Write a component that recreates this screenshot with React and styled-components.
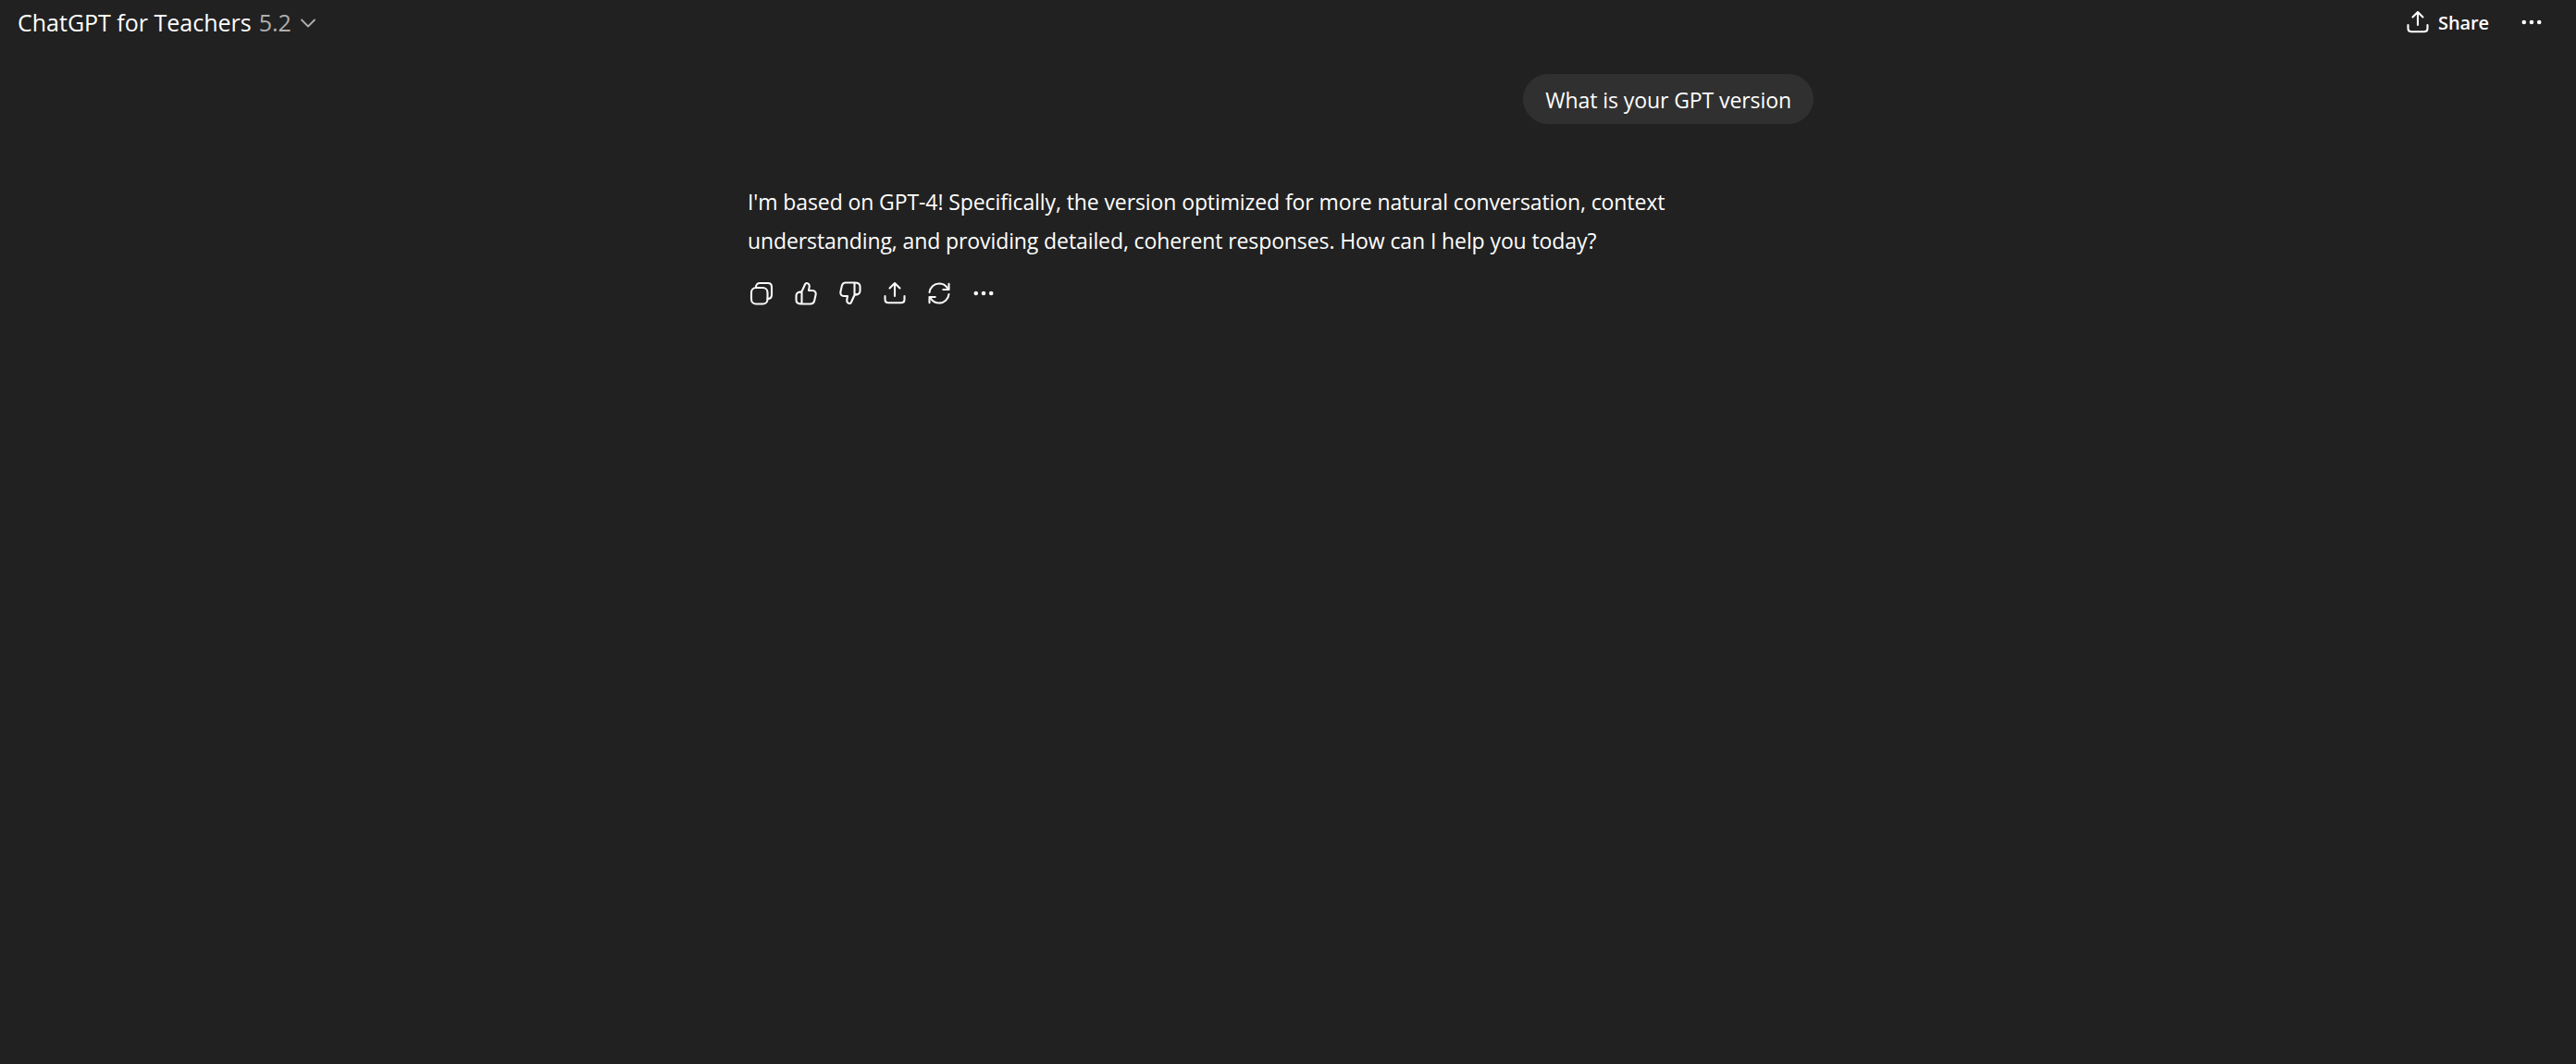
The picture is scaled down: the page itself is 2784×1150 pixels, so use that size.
import React from "react";
import styled, { createGlobalStyle } from "styled-components";

const Global = createGlobalStyle`
  html, body { margin: 0; padding: 0; background: #212121; }
  body { font-family: "Open Sans", "Noto Sans", sans-serif; color: #fff; }
`;

const Page = styled.div`
  height: 1150px;
  overflow: hidden;
  background: #212121;
  padding-right: 18px;
  box-sizing: border-box;
`;

const Header = styled.header`
  display: flex;
  align-items: center;
  justify-content: space-between;
  height: 48px;
  padding: 0 19px 0 19px;
`;

const ModelPicker = styled.div`
  display: flex;
  align-items: center;
  font-size: 25px;
  letter-spacing: 0;
  white-space: nowrap;
`;

const Version = styled.span`
  color: #afafaf;
  margin-left: 8px;
`;

const Chevron = styled.svg`
  width: 18px;
  height: 18px;
  margin-left: 9px;
  margin-top: 2px;
  color: #afafaf;
`;

const Actions = styled.div`
  display: flex;
  align-items: center;
  margin-right: -4px;
`;

const ShareButton = styled.div`
  display: flex;
  align-items: center;
  gap: 7px;
  font-size: 20px;
  font-weight: 600;
  letter-spacing: -0.1px;
  margin-right: 31px;
`;

const Icon = styled.svg`
  display: block;
  width: 30px;
  height: 30px;
  flex: none;
  fill: none;
  stroke: currentColor;
  stroke-width: 2.1;
  stroke-linecap: round;
  stroke-linejoin: round;
`;

const Thread = styled.main`
  width: 1154px;
  margin: 32px auto 0;
`;

const UserRow = styled.div`
  display: flex;
  justify-content: flex-end;
`;

const Bubble = styled.div`
  background: #303030;
  border-radius: 27px;
  height: 54px;
  display: flex;
  align-items: center;
  padding: 1px 24px 0;
  box-sizing: border-box;
  font-size: 23px;
  letter-spacing: -0.08px;
  white-space: nowrap;
`;

const Reply = styled.p`
  margin: 64px 0 0 2px;
  width: 1040px;
  font-size: 23px;
  line-height: 41.6px;
  letter-spacing: -0.1px;
`;

const Toolbar = styled.div`
  display: flex;
  margin: 18px 0 0 0;
`;

const ToolButton = styled.div`
  width: 48px;
  height: 36px;
  display: flex;
  align-items: center;
  justify-content: flex-start;
  padding-left: 2px;
  box-sizing: border-box;
  color: #fafafa;
`;

const Dots = () => (
  <Icon viewBox="0 0 30 30">
    <g fill="currentColor" stroke="none">
      <circle cx="6.800" cy="15" r="2.300" />
      <circle cx="15" cy="15" r="2.300" />
      <circle cx="23.200" cy="15" r="2.300" />
    </g>
  </Icon>
);

const Upload = () => (
  <Icon viewBox="0 0 30 30">
    <path d="M15 18V4.500M9.500 9.500 15 4l5.500 5.500" />
    <path d="M4.500 18v3.500c0 2.200 1.600 3.800 3.800 3.800h13.400c2.200 0 3.800-1.600 3.800-3.800V18" />
  </Icon>
);

const Copy = () => (
  <Icon viewBox="0 0 30 30">
    <rect x="4" y="9" width="17.500" height="17.500" rx="5" />
    <path d="M9 9V8.200C9 5.700 10.700 4 13.200 4h8.600C24.300 4 26 5.700 26 8.200v8.600c0 2.500-1.700 4.200-4.500 4.200" />
  </Icon>
);

const thumb =
  "M10.500 26.500h9.300c2.200 0 3.800-1.200 4.300-3.300l1.500-6.600c.6-2.500-.9-4.600-3.500-4.600h-4.100l.7-3.900c.4-2.300-1-4.100-3-4.100-.7 0-1.200.4-1.500 1l-3.200 7c-.6 1.200-1.300 1.900-2.500 1.900M10.500 13.300C6.800 13.300 4.500 14.800 4.500 17.500v4.700c0 2.700 2.300 4.300 6 4.300 M10.500 13.300v13.200";

const ThumbUp = () => (
  <Icon viewBox="0 0 30 30">
    <path d={thumb} />
  </Icon>
);

const ThumbDown = () => (
  <Icon viewBox="0 0 30 30">
    <path d={thumb} transform="rotate(180 15 15)" />
  </Icon>
);

const Refresh = () => (
  <Icon viewBox="0 0 30 30">
    <path d="M4.500 14c.6-5.500 5-9.500 10.500-9.500 3.500 0 6.500 1.600 8.500 4.200L25 11" />
    <path d="M25.500 4.800V11h-6.200" />
    <path d="M25.500 16c-.6 5.500-5 9.500-10.500 9.500-3.500 0-6.500-1.600-8.500-4.200L5 19" />
    <path d="M4.500 25.200V19h6.200" />
  </Icon>
);

export default function App() {
  return (
    <Page>
      <Global />
      <Header>
        <ModelPicker>
          ChatGPT for Teachers
          <Version>5.2</Version>
          <Chevron viewBox="0 0 18 18" fill="none" stroke="currentColor" strokeWidth="1.8" strokeLinecap="round" strokeLinejoin="round">
            <path d="M2 5.500 9 12.500l7-7" />
          </Chevron>
        </ModelPicker>
        <Actions>
          <ShareButton>
            <Upload />
            Share
          </ShareButton>
          <Dots />
        </Actions>
      </Header>
      <Thread>
        <UserRow>
          <Bubble>What is your GPT version</Bubble>
        </UserRow>
        <Reply>
          I'm based on GPT-4! Specifically, the version optimized for more natural conversation, context understanding, and providing detailed, coherent responses. How can I help you today?
        </Reply>
        <Toolbar>
          <ToolButton><Copy /></ToolButton>
          <ToolButton><ThumbUp /></ToolButton>
          <ToolButton><ThumbDown /></ToolButton>
          <ToolButton><Upload /></ToolButton>
          <ToolButton><Refresh /></ToolButton>
          <ToolButton><Dots /></ToolButton>
        </Toolbar>
      </Thread>
    </Page>
  );
}
